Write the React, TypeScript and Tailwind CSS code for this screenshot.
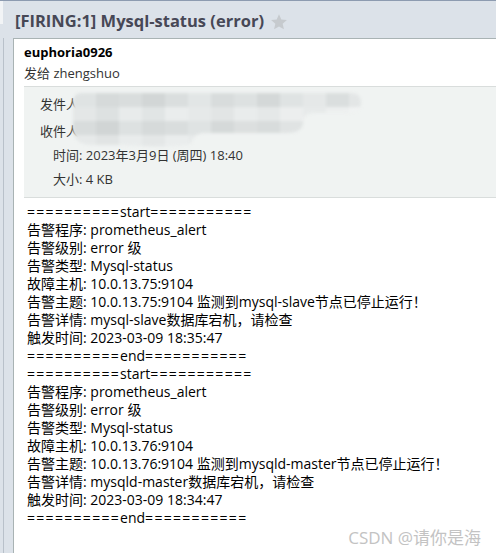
import React from 'react';

const FONT = "font-['Segoe_UI','Open_Sans','Noto_Sans_CJK_SC',sans-serif]";

// mosaic cells that hide the sender / recipient addresses
const MOSAIC: string[][] = [
  ['#dfe3e3', '#d6dada', '#d9dddd', '#d2d6d6', '#dadede', '#e2e6e6', '#d8dcdc', '#dde1e1', '#d4d8d8', '#dfe3e3', '#e5e8e8', '#dadede', '#e3e6e6'],
  ['#e4e7e7', '#dde1e1', '#e8ebeb', '#e1e5e5', '#eaeded', '#e6e9e9', '#e2e5e5', '#e9ecec', '#e5e8e8', '#eceeee', '#e7eaea', '#edefef', '#f0f2f2'],
  ['#d8dcdc', '#d1d5d5', '#dde1e1', '#d6dada', '#d9dddd', '#dfe3e3', '#d5d9d9', '#dcdfdf', '#d8dcdc', '#e0e3e3', '#dadede', '#eef0f0', '#f0f3f2'],
  ['#e6e9e9', '#e1e4e4', '#e9ecec', '#e4e7e7', '#eaeded', '#e7eaea', '#ebeeee', '#e3e6e6', '#e9ebeb', '#eef0f0', '#f0f3f2', '#f0f3f2', '#f0f3f2'],
];

function Mosaic() {
  return (
    <svg width="290" height="56" viewBox="0 0 290 56" className="blur-[1.5px]">
      <defs>
        <clipPath id="blob">
          <path d="M8 0 H278 Q288 0 288 10 Q288 20 272 20 H240 Q230 20 230 30 Q230 40 212 40 H130 Q122 40 118 50 Q112 56 50 52 H20 Q0 52 0 36 V10 Q0 0 8 0 Z" />
        </clipPath>
      </defs>
      <g clipPath="url(#blob)">
        {MOSAIC.map((row, r) =>
          row.map((c, i) => (
            <rect key={`${r}-${i}`} x={i * 23} y={r * 14} width="23" height="14" fill={c} />
          ))
        )}
      </g>
    </svg>
  );
}

function Rule({ word }: { word: string }) {
  return (
    <div>
      <span className="tracking-[1.3px]">==========</span>
      {word}
      <span className="tracking-[1.3px]">===========</span>
    </div>
  );
}

function AlertBlock({ host, node, time }: { host: string; node: string; time: string }) {
  return (
    <>
      <Rule word="start" />
      <div>告警程序: prometheus_alert</div>
      <div>告警级别: error 级</div>
      <div>告警类型: Mysql-status</div>
      <div>故障主机: {host}:9104</div>
      <div>告警主题: {host}:9104 监测到{node}节点已停止运行！</div>
      <div>告警详情: {node}数据库宕机，请检查</div>
      <div>触发时间: {time}</div>
      <Rule word="end" />
    </>
  );
}

export default function App() {
  return (
    <div className={`w-[496px] h-[553px] overflow-hidden bg-[#dce2e9] border-t border-[#8d9bb0] flex flex-col ${FONT}`}>
      {/* Header */}
      <div className="h-[37px] flex items-start shrink-0">
        <div className="w-[3px] h-[23px] bg-[#f2f4f6]" />
        <div className="pl-[12px] pt-[8px] flex items-center gap-[6px]">
          <span className="text-[16.5px] font-bold text-[#474856] leading-[24px]">[FIRING:1] Mysql-status (error)</span>
          <svg width="18" height="18" viewBox="0 0 24 24" className="mt-[1px]">
            <path
              d="M12 1.8l3.1 6.9 7.4.7-5.6 5 1.7 7.4L12 17.9l-6.6 3.9 1.7-7.4-5.6-5 7.4-.7z"
              fill="#c6cace"
            />
          </svg>
        </div>
      </div>

      <div className="flex-1 flex">
        {/* left rail */}
        <div className="w-[13px] shrink-0 flex">
          <div className="w-[3px]" />
          <div className="w-[1px] bg-[#b9c1ca]" />
        </div>

        {/* message */}
        <div className="flex-1 bg-white border-l border-t border-[#a9b3b4] text-black">
          <div className="pl-[10px] pt-[4px]">
            <div className="text-[13px] font-bold leading-[18px]">euphoria0926</div>
            <div className="text-[13px] leading-[18px] text-[#333] mt-[3px]">发给 zhengshuo</div>
          </div>

          <div className="relative ml-[10px] mt-[4px] bg-[#f0f3f2] border-y border-[#d9dddc] h-[112px] text-[13px] text-[#333] leading-[18px]">
            <div className="pl-[16px] pt-[8px]">发件人</div>
            <div className="pl-[16px] mt-[9px]">收件人</div>
            <div className="pl-[29px] mt-[6px]">时间: 2023年3月9日 (周四) 18:40</div>
            <div className="pl-[29px] mt-[6px]">大小: 4 KB</div>
            <div className="absolute left-[49px] top-[6px]">
              <Mosaic />
            </div>
          </div>

          <div className="relative pl-[13px] pt-[5px] text-[14px] leading-[18px]">
            <AlertBlock host="10.0.13.75" node="mysql-slave" time="2023-03-09 18:35:47" />
            <AlertBlock host="10.0.13.76" node="mysqld-master" time="2023-03-09 18:34:47" />
            <div className="absolute right-[15px] top-[330px] text-[17px] leading-[20px] text-[#c3c3c3] [text-shadow:0_0_1px_#fff]">
              CSDN @请你是海
            </div>
          </div>
        </div>
      </div>
    </div>
  );
}
